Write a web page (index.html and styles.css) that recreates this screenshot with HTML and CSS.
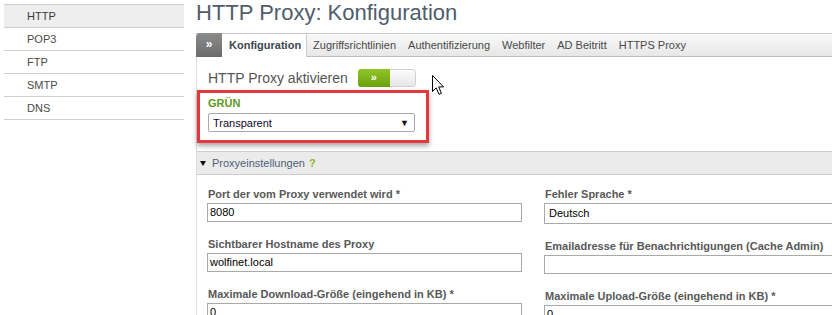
FILE: index.html
```html
<!DOCTYPE html>
<html lang="de">
<head>
<meta charset="utf-8">
<title>HTTP Proxy: Konfiguration</title>
<link rel="stylesheet" href="styles.css">
</head>
<body>
<div class="page">
  <nav class="side">
    <div class="side-item active">HTTP</div>
    <div class="side-item">POP3</div>
    <div class="side-item">FTP</div>
    <div class="side-item">SMTP</div>
    <div class="side-item">DNS</div>
  </nav>
  <main class="main">
    <h1 class="title">HTTP Proxy: Konfiguration</h1>
    <div class="tabs">
      <div class="tab-arrow">»</div>
      <div class="tab active">Konfiguration</div>
      <div class="tab">Zugriffsrichtlinien</div>
      <div class="tab">Authentifizierung</div>
      <div class="tab">Webfilter</div>
      <div class="tab">AD Beitritt</div>
      <div class="tab">HTTPS Proxy</div>
    </div>
    <div class="panel">
      <div class="toggle-row">
        <span class="toggle-label">HTTP Proxy aktivieren</span>
        <span class="toggle"><span class="toggle-on">»</span><span class="toggle-off"></span></span>
      </div>
      <div class="zone-box">
        <div class="zone-label">GRÜN</div>
        <div class="select zone-select"><span>Transparent</span><span class="caret">▼</span></div>
      </div>
      <div class="section-head"><span class="tri"></span><span class="section-title">Proxyeinstellungen</span><span class="help">?</span></div>
      <div class="fields">
        <div class="col">
          <div class="field">
            <div class="label">Port der vom Proxy verwendet wird *</div>
            <div class="input">8080</div>
          </div>
          <div class="field">
            <div class="label">Sichtbarer Hostname des Proxy</div>
            <div class="input">wolfinet.local</div>
          </div>
          <div class="field">
            <div class="label">Maximale Download-Größe (eingehend in KB) *</div>
            <div class="input">0</div>
          </div>
        </div>
        <div class="col">
          <div class="field">
            <div class="label">Fehler Sprache *</div>
            <div class="input input-select">Deutsch</div>
          </div>
          <div class="field">
            <div class="label">Emailadresse für Benachrichtigungen (Cache Admin)</div>
            <div class="input"></div>
          </div>
          <div class="field">
            <div class="label">Maximale Upload-Größe (eingehend in KB) *</div>
            <div class="input">0</div>
          </div>
        </div>
      </div>
    </div>
  </main>
  <svg class="cursor" width="14" height="22" viewBox="0 0 14 22" aria-hidden="true">
    <path d="M1.5 1.5 L1.5 17.5 L5.2 13.9 L8 20.3 L10.4 19.3 L7.7 12.9 L12.6 12.9 Z" fill="#fff" stroke="#000" stroke-width="1" stroke-linejoin="miter"/>
  </svg>
</div>
</body>
</html>
```
FILE: styles.css
```css
html, body {
  margin: 0;
  padding: 0;
  background: #fff;
}
body {
  width: 832px;
  height: 315px;
  overflow: hidden;
  font-family: "Liberation Sans", Arial, sans-serif;
  font-size: 11px;
  color: #444;
}
.page {
  position: relative;
  display: flex;
  width: 832px;
  height: 315px;
}

/* sidebar */
.side {
  width: 180px;
  flex-shrink: 0;
  margin: 4px 0 0 4px;
  border-top: 1px solid #cfcfcf;
  align-self: flex-start;
}
.side-item {
  height: 22px;
  line-height: 22px;
  border-bottom: 1px solid #cfcfcf;
  padding-left: 23px;
  font-size: 11px;
  color: #4a4a4a;
}
.side-item.active {
  background: #eeeeee;
  color: #3a3a3a;
}

/* main */
.main {
  flex: 1;
  min-width: 0;
  margin-left: 12px;
}
.title {
  margin: 0;
  height: 33px;
  font-size: 22px;
  line-height: 25px;
  font-weight: normal;
  color: #4f5d6b;
  white-space: nowrap;
}

/* tabs */
.tabs {
  display: flex;
  height: 22px;
  border-top: 1px solid #cccccc;
  border-bottom: 1px solid #bdbdbd;
  background: linear-gradient(#f8f8f8, #e7e7e7);
}
.tab-arrow {
  width: 26px;
  margin-top: -1px;
  margin-bottom: -1px;
  background: linear-gradient(#8c8c8c, #6b6b6b);
  border-radius: 4px 0 0 0;
  color: #fff;
  font-weight: bold;
  font-size: 12px;
  line-height: 23px;
  text-align: center;
}
.tab {
  padding: 0 6px;
  line-height: 22px;
  font-size: 11px;
  color: #4a4a4a;
  white-space: nowrap;
}
.tab.active {
  background: #fff;
  margin-bottom: -1px;
  padding: 0 5px 0 7px;
  border-right: 1px solid #cccccc;
  font-weight: bold;
  color: #3d4650;
}

/* panel */
.panel {
  border-left: 1px solid #dcdcdc;
  height: 258px;
}
.toggle-row {
  display: flex;
  align-items: center;
  height: 18px;
  padding: 12px 0 0 11px;
}
.toggle-label {
  font-size: 14px;
  color: #555;
  margin-right: 10px;
  white-space: nowrap;
}
.toggle {
  display: flex;
  width: 58px;
  height: 18px;
}
.toggle-on {
  width: 32px;
  height: 18px;
  background: linear-gradient(#92c628, #69a00c);
  border-radius: 3px 0 0 3px;
  color: #fff;
  font-weight: bold;
  font-size: 11px;
  line-height: 17px;
  text-align: center;
}
.toggle-off {
  flex: 1;
  height: 16px;
  border: 1px solid #d0d0d0;
  border-left: none;
  border-radius: 0 4px 4px 0;
  background: linear-gradient(#fcfcfc, #e6e6e6);
}

.zone-box {
  width: 207px;
  margin-top: 3px;
  padding: 4px 11px 8px 8px;
  border: 3px solid #e5383e;
  box-shadow: 0 3px 5px rgba(0, 0, 0, 0.35);
}
.zone-label {
  font-size: 11px;
  line-height: 13px;
  font-weight: bold;
  color: #5b9a1c;
  margin-bottom: 3px;
}
.select {
  display: flex;
  justify-content: space-between;
  align-items: center;
  box-sizing: border-box;
  height: 19px;
  border: 1px solid #a9a9a9;
  border-radius: 2px;
  padding: 0 5px 0 4px;
  font-size: 11px;
  color: #120a2a;
  background: #fff;
}
.zone-select {
  width: 207px;
}
.caret {
  font-size: 9px;
  color: #111;
}

.section-head {
  display: flex;
  align-items: center;
  height: 22px;
  margin-top: 8px;
  border-top: 1px solid #cdcdcd;
  border-bottom: 1px solid #cdcdcd;
  background: #ebebeb;
  padding-left: 3px;
}
.tri {
  width: 0;
  height: 0;
  border-left: 3.5px solid transparent;
  border-right: 3.5px solid transparent;
  border-top: 5px solid #111;
  margin-right: 6px;
}
.section-title {
  font-size: 11px;
  color: #4d6176;
}
.help {
  margin-left: 4px;
  font-size: 11px;
  color: #8cb51f;
  font-weight: bold;
}

.fields {
  display: flex;
  gap: 22px;
  padding: 12px 0 0 10px;
}
.col {
  width: 315px;
  flex-shrink: 0;
}
.field {
  margin-bottom: 15px;
}
.label {
  font-size: 11px;
  line-height: 14px;
  font-weight: bold;
  color: #585858;
  padding-left: 1px;
  margin-bottom: 2px;
  white-space: nowrap;
}
.input {
  box-sizing: border-box;
  height: 19px;
  border: 1px solid #a9a9a9;
  padding: 0 2px;
  font-size: 11px;
  line-height: 17px;
  color: #000;
  background: #fff;
}
.input-select {
  height: 21px;
  line-height: 19px;
  padding-left: 4px;
  margin-bottom: 1px;
}

.cursor {
  position: absolute;
  left: 431px;
  top: 74px;
}
```
